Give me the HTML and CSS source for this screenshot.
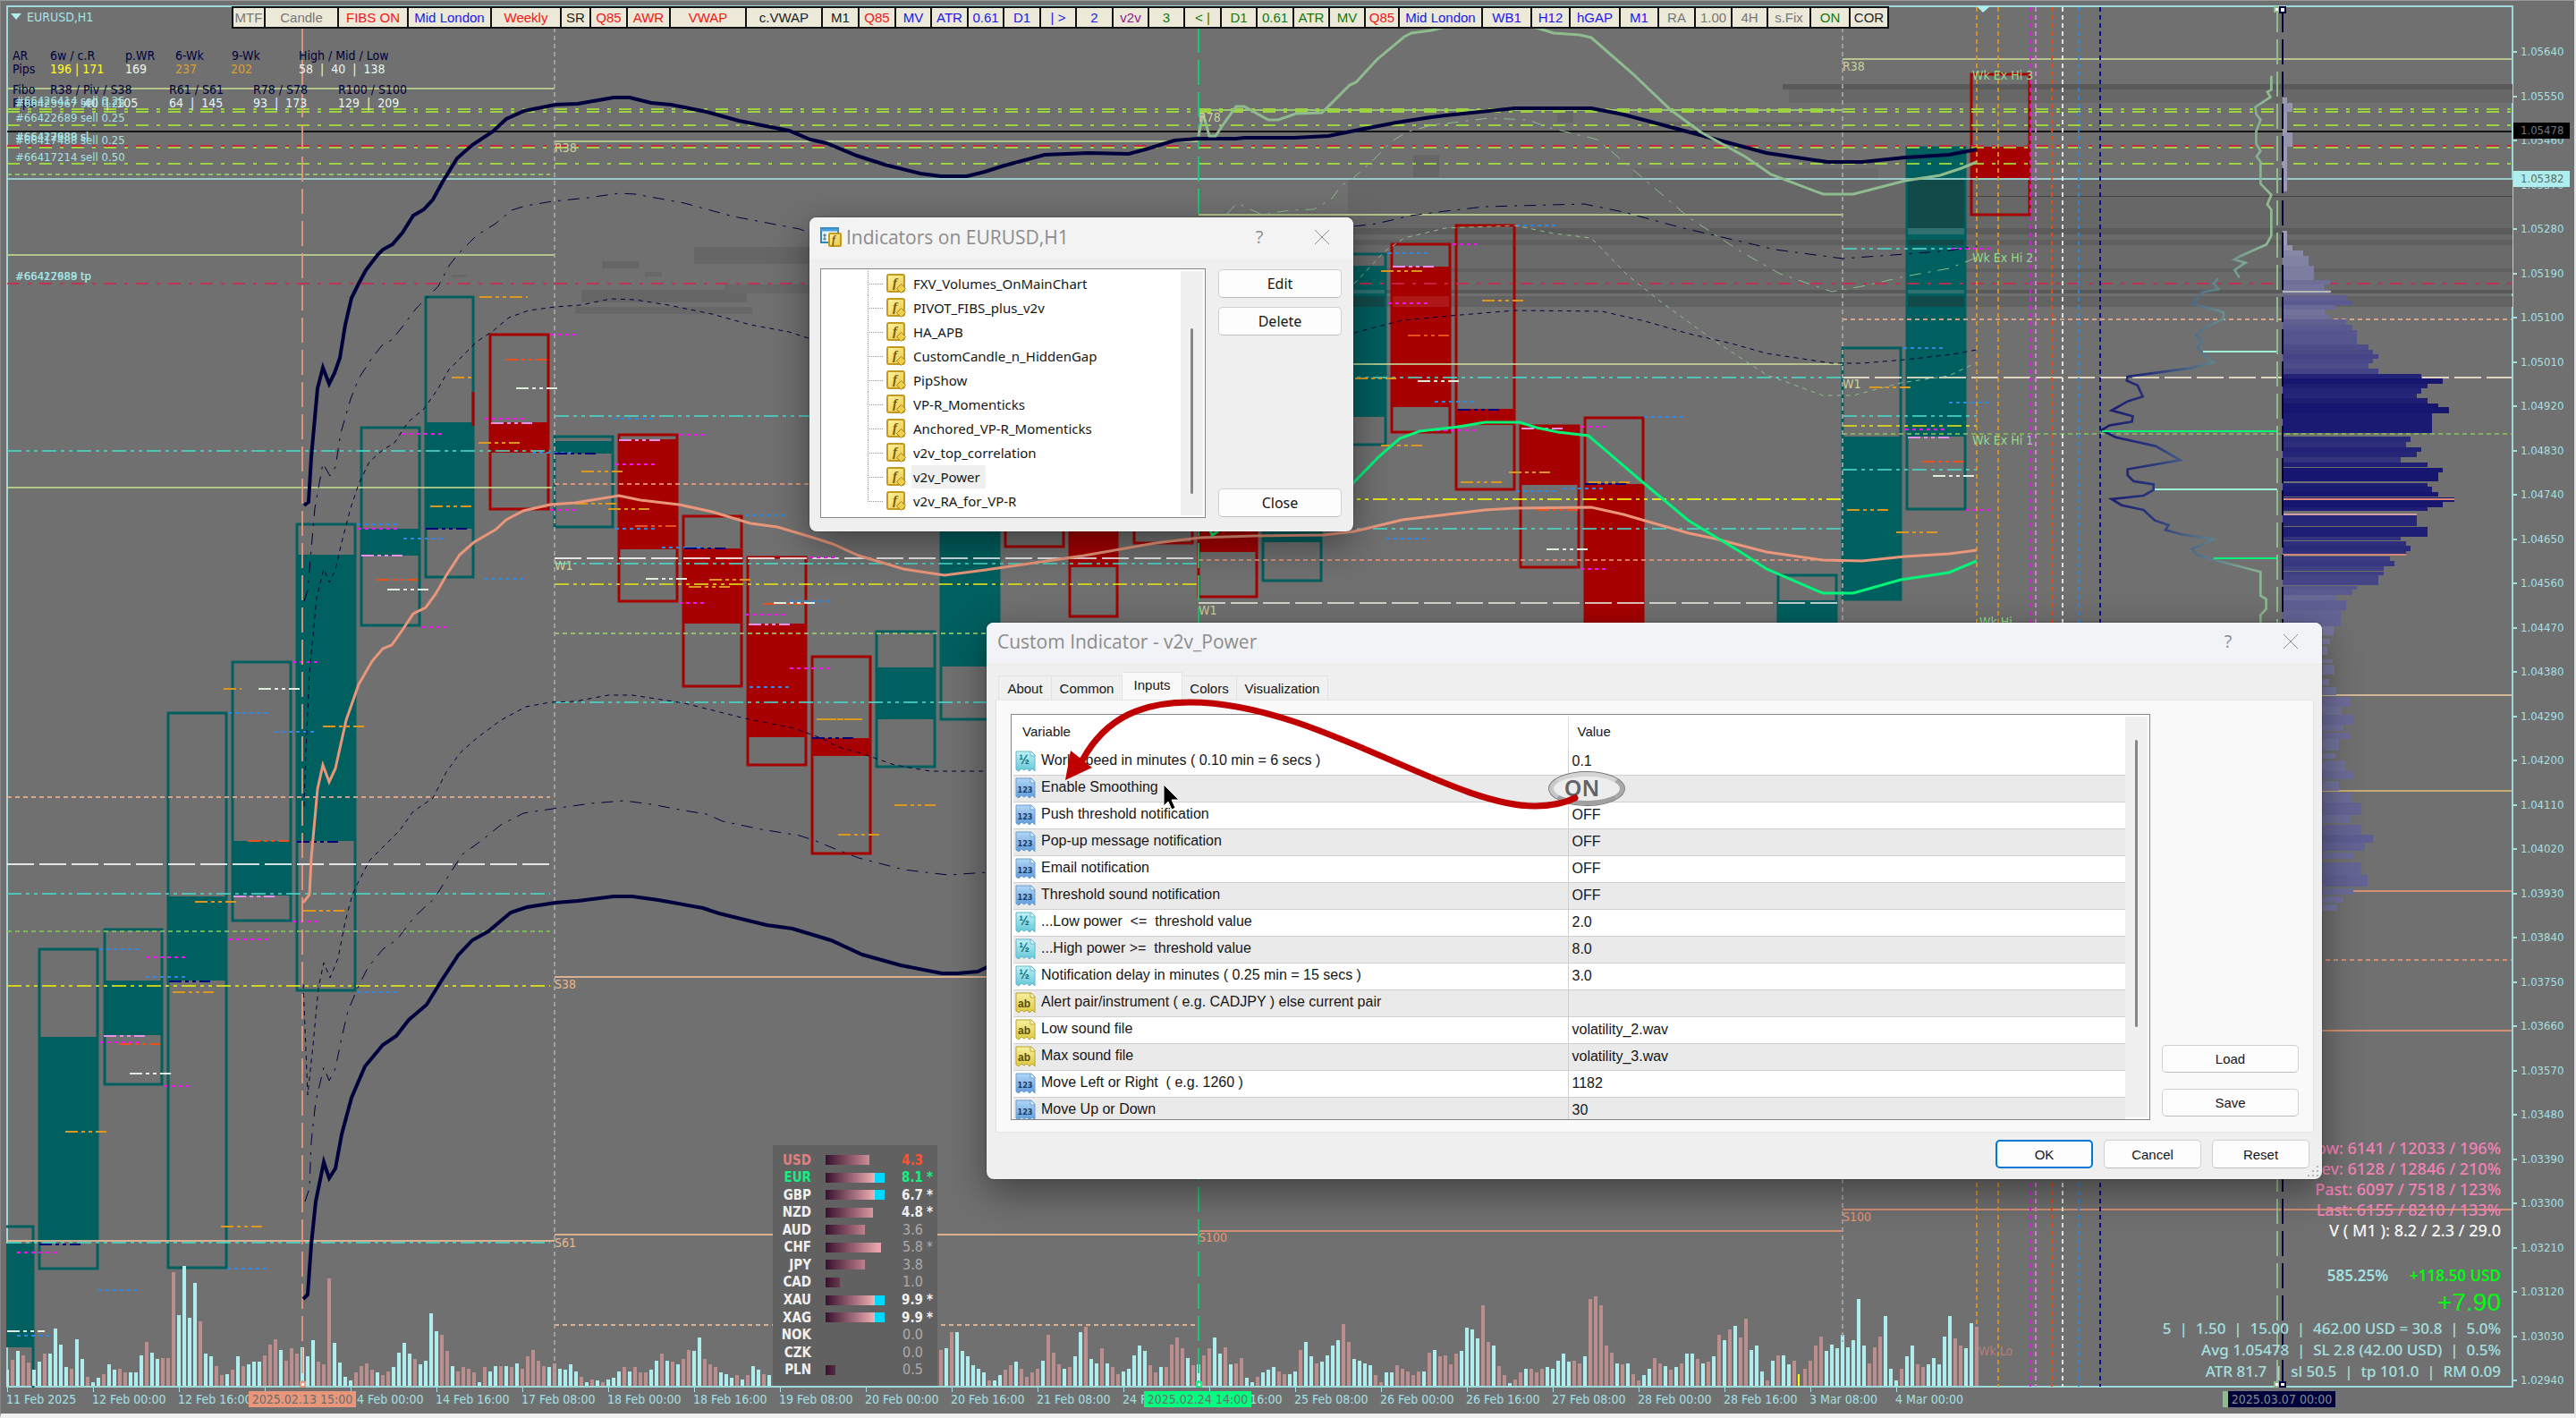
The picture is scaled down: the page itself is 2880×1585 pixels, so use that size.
FILE: index.html
```html
<!DOCTYPE html>
<html lang="en">
<head>
<meta charset="utf-8">
<title>EURUSD,H1</title>
<link rel="stylesheet" href="styles.css">
</head>
<body>
<svg class="defs" aria-hidden="true">
  <defs>
    <linearGradient id="gold" x1="0" y1="0" x2="1" y2="1"><stop offset="0" stop-color="#fff6a8"/><stop offset="1" stop-color="#e8c43c"/></linearGradient>
    <linearGradient id="blue" x1="0" y1="0" x2="0" y2="1"><stop offset="0" stop-color="#b4d6f6"/><stop offset="1" stop-color="#5f9bd8"/></linearGradient>
    <linearGradient id="cyan" x1="0" y1="0" x2="0" y2="1"><stop offset="0" stop-color="#c4f2f6"/><stop offset="1" stop-color="#62c6d6"/></linearGradient>
    <linearGradient id="yellow" x1="0" y1="0" x2="0" y2="1"><stop offset="0" stop-color="#f8f0a0"/><stop offset="1" stop-color="#dcc840"/></linearGradient>
    <symbol id="i-fn" viewBox="0 0 22 22">
      <rect x="1" y="1" width="19" height="19" rx="2" fill="url(#gold)" stroke="#c39a1d" stroke-width="2"/>
      <text x="7" y="15" class="glyph-f">f</text>
      <path d="M16.500 11.500l5 5-5 5-5-5z" fill="#f0cf4a" stroke="#a9821a"/>
    </symbol>
    <symbol id="i-num" viewBox="0 0 23 24">
      <path d="M1 1h17l4 4v18l-3-3-3 3-3-3-3 2-3-2-3 3-3-2z" fill="url(#blue)" stroke="#6a9fd0"/>
      <path d="M17 1v5h5" fill="#e4f1fc" stroke="#6a9fd0"/>
      <text x="11" y="17" class="glyph-num">123</text>
    </symbol>
    <symbol id="i-dbl" viewBox="0 0 23 24">
      <path d="M1 1h17l4 4v18l-3-3-3 3-3-3-3 2-3-2-3 3-3-2z" fill="url(#cyan)" stroke="#5cb8c8"/>
      <path d="M17 1v5h5" fill="#e6fbfd" stroke="#5cb8c8"/>
      <text x="10" y="15" class="glyph-dbl">½</text>
    </symbol>
    <symbol id="i-str" viewBox="0 0 23 24">
      <path d="M1 1h17l4 4v18l-3-3-3 3-3-3-3 2-3-2-3 3-3-2z" fill="url(#yellow)" stroke="#b9a52e"/>
      <path d="M17 1v5h5" fill="#fffbd0" stroke="#b9a52e"/>
      <text x="10" y="17" class="glyph-str">ab</text>
    </symbol>
  </defs>
</svg>

<main class="terminal">
  <section class="plot">
    <svg class="canvas" viewBox="7 6 2803 1545" preserveAspectRatio="none" aria-label="EURUSD H1 chart">
      <defs>
        <linearGradient id="flow" gradientUnits="userSpaceOnUse" x1="380" y1="0" x2="800" y2="0">
          <stop offset="0" stop-color="#191970"/><stop offset=".3" stop-color="#28357a"/><stop offset=".6" stop-color="#55758a"/><stop offset=".85" stop-color="#7aa590"/><stop offset="1" stop-color="#8fbc8f"/>
        </linearGradient>
      </defs>
      <g id="bands"></g>
      <g id="candles"></g>
      <g id="levels"></g>
      <g id="marks"></g>
      <g id="volume"></g>
      <g class="verticals">
        <path class="v-long darksalmon" d="M338 31V1550"/>
        <path class="v-dash silver" d="M620 31V1550M2060 31V1500"/>
        <path class="v-long spring" d="M1340 31V1550"/>
        <path class="v-dash orange" d="M2210 8V1480M2234 8V1550"/>
        <path class="v-dash magenta" d="M2270 8V1550"/>
        <path class="v-dash violet" d="M2276 8V1550"/>
        <path class="v-dash orangered" d="M2294 8V1550"/>
        <path class="v-dash white" d="M2306 8V1550"/>
        <path class="v-dash blue" d="M2324 8V1550"/>
        <path class="v-dash navy" d="M2348 8V1550"/>
      </g>
      <g class="curves">
        <path class="wide navyline" d="M340 565L345 561 348 511 355 434 361 411 368 429 374 417 380 400 386 363 393 333 401 317 409 302 422 285 428 279 439 273 450 260 462 241 474 234 484 223 495 203 511 177 528 162 551 147 566 133 586 124 621 117 646 116 686 109 704 109 728 115 750 117 790 125 826 135 882 146 906 156 924 160 958 174 989 184 1029 194 1052 197 1081 197 1101 192 1123 185 1168 173 1217 171 1262 172 1284 166 1313 157 1340 155 1382 155 1391 154 1447 154 1485 152 1525 144 1561 137 1600 131 1616 129 1665 124 1694 121 1779 121 1815 128 1849 137 1912 154 1975 171 2043 181 2082 181 2130 176 2179 173 2210 167"/>
        <path class="wide navyline" d="M339 1452L344 1447 348 1391 353 1343 362 1299 368 1317 375 1306 382 1268 393 1227 408 1192 428 1168 443 1158 457 1140 477 1123 493 1097 512 1068 528 1051 546 1041 571 1020 589 1014 621 1009 646 1007 686 1002 707 1002 736 1006 786 1015 804 1021 857 1034 886 1038 929 1051 964 1067 1007 1079 1053 1088 1071 1088 1093 1086 1110 1078"/>
        <path class="thin dashdot navyline" d="M340 672L344 660 348 614 352 568 361 518 369 532 375 522 381 484 392 446 401 423 416 400 428 385 438 380 450 365 465 345 477 333 490 320 502 297 513 283 533 263 554 250 572 235 588 230 618 225 658 221 692 216 710 217 765 227 820 242 857 249 894 256 910 262M1514 253L1539 250 1577 241 1616 236 1660 231 1771 228 1815 237 1878 254 1985 279 2060 289 2130 284 2179 280 2210 275"/>
        <path class="thin dotted navyline" d="M340 901L342 840 346 752 354 668 362 636 368 651 375 637 382 606 392 568 401 541 413 516 428 503 441 495 456 472 474 457 490 434 502 413 517 398 533 382 551 370 569 355 591 347 621 343 649 341 683 334 710 335 747 341 796 351 839 363 882 371 910 380M1514 372L1568 358 1621 353 1694 347 1791 348 1839 359 1888 373 1936 384 1975 395 2048 406 2082 406 2130 402 2183 396 2210 391"/>
        <path class="thin dotted navyline" d="M339 1100L344 1224 350 1168 356 1104 362 1076 369 1093 378 1071 386 1030 394 1000 401 985 413 962 432 943 447 928 462 907 484 892 499 863 514 842 533 825 560 805 588 790 615 785 643 784 680 777 707 777 765 786 833 803 888 814 918 825 937 835 960 841 1000 855 1040 862 1104 862"/>
        <path class="thin dashdot navyline" d="M341 1343L346 1328 348 1276 353 1231 362 1193 368 1208 375 1194 382 1160 389 1130 400 1104 411 1082 428 1061 444 1050 464 1024 486 1004 502 978 517 955 539 939 560 922 585 909 618 904 661 898 698 895 728 899 765 906 790 910 808 918 851 927 894 934 912 940 934 949 960 959 1010 972 1060 978 1104 975"/>
        <path class="mid darksalmon" d="M339 1009L346 1000 348 959 355 882 361 855 368 874 375 859 387 805 401 765 416 739 428 725 438 721 450 704 462 686 476 679 487 664 499 643 514 620 530 606 554 592 566 581 585 571 615 564 643 562 692 554 716 559 759 564 796 572 839 585 869 589 906 600 931 608 960 621 1010 636 1056 643 1102 637 1212 621 1292 607 1341 601 1402 599 1480 598 1514 594 1568 581 1660 570 1694 568 1779 567 1815 575 1839 582 1888 596 1917 602 1975 617 2038 626 2082 627 2130 622 2179 619 2210 615"/>
        <path class="mid palegreen" d="M1340 152L1345 127 1352 152 1359 152 1369 137 1382 119 1391 119 1418 134 1429 134 1449 127 1478 126 1509 95 1516 92 1540 66 1570 41 1578 37 1600 34 1616 30 1660 26 1718 31 1737 37 1766 39 1779 42 1825 82 1868 123 1902 148 1951 175 1980 195 2038 217 2072 217 2130 202 2169 196 2193 188 2210 181"/>
        <path class="thin dashdot palegreen" d="M1372 239L1383 227 1411 240 1442 235 1469 234 1489 222 1500 207 1512 200 1534 180 1556 158 1572 148 1600 140 1665 132 1708 134 1733 143 1786 156 1839 201 1888 243 1946 281 1990 306 2048 326 2082 320 2130 309 2179 300 2210 288"/>
        <path class="thin dotted palegreen" d="M1514 317L1548 281 1570 266 1616 255 1694 252 1737 261 1779 266 1820 308 1859 339 1917 381 1975 419 2038 442 2072 442 2125 428 2179 420 2210 405"/>
        <path class="mid spring" d="M1352 590L1355 598 1362 594M1508 545L1541 511 1565 490 1587 482 1631 477 1660 472 1699 472 1718 478 1742 483 1776 487 1839 541 1888 582 1946 617 1975 636 2038 663 2072 663 2125 648 2179 640 2210 627"/>
      </g>
      <g id="profile"></g>
      <g transform="translate(2180 0) scale(.4464)">
        <path class="flow" d="M805 190V225L795 230 803 243 765 268 767 285 778 300 767 330V360L778 378 768 392 778 405V460L805 488 795 512 805 525V590L793 612 730 640 712 650 740 658 713 676 725 695M672 697L660 710 672 724 632 732 607 760 685 782V798L640 820 617 840 632 855 620 872 660 908 600 922 445 943 443 953 470 965 483 993 445 1005 405 1028 458 1042 456 1056 400 1065 380 1077 415 1095 515 1117 577 1152 445 1175V1190L460 1205 510 1213V1227L485 1241 405 1250 430 1265 485 1277 513 1303 548 1315 540 1327 580 1338 660 1350 607 1375 620 1390 700 1412 778 1432V1492L792 1500V1525L778 1540V1568"/>
      </g>
      <path class="aqua" d="M2463 393H2546M2409 547H2546"/>
      <path class="spring thin2" d="M2350 482H2546M2475 624H2546"/>
      <path class="v-long palegreen" d="M2546 8V1550"/>
      <path class="v-long midnight" d="M2552 8V1550"/>
      <g class="pins">
        <rect x="2543" y="8" width="5" height="5" stroke="#8fbc8f"/><rect x="2549" y="8" width="6" height="6" stroke="#00003c"/>
        <rect x="2543" y="1545" width="5" height="5" stroke="#8fbc8f"/><rect x="2549" y="1545" width="6" height="5" stroke="#00003c"/>
        <rect x="336" y="1545" width="5" height="5" stroke="#e9967a"/><rect x="1338" y="1545" width="5" height="5" stroke="#00ff7f"/>
      </g>
      <path d="M2210 7H2225L2217 14z" fill="#afeeee"/>
      <path d="M12 15H24L18 22z" fill="#afeeee"/>
      <g class="label">
        <text class="t-turq" x="30" y="24">EURUSD,H1</text>
        <g class="t-navy">
          <text x="14" y="67">AR</text><text x="56" y="67">6w / c.R</text><text x="140" y="67">p.WR</text><text x="196" y="67">6-Wk</text><text x="259" y="67">9-Wk</text><text x="334" y="67">High / Mid / Low</text>
          <text x="14" y="82">Pips</text>
          <text x="14" y="105">Fibo</text><text x="56" y="105">R38 / Piv / S38</text><text x="189" y="105">R61 / S61</text><text x="283" y="105">R78 / S78</text><text x="378" y="105">R100 / S100</text>
          <text x="14" y="120">Pips</text>
        </g>
        <text class="t-yellow" x="56" y="82">196 | 171</text>
        <g class="t-orange"><text x="196" y="82">237</text><text x="258" y="82">202</text></g>
        <g class="t-pale">
          <text x="140" y="82">169</text><text x="334" y="82" xml:space="preserve">58  |  40  |  138</text>
          <text x="94" y="120" xml:space="preserve">40  |  105</text><text x="189" y="120" xml:space="preserve">64  |  145</text><text x="283" y="120" xml:space="preserve">93  |  173</text><text x="378" y="120" xml:space="preserve">129  |  209</text>
        </g>
      </g>
      <g class="order">
        <text x="17" y="117">#66426414 sell 0.25</text><text x="17" y="120">#66423967 sell 0.25</text>
        <text x="17" y="136">#66422689 sell 0.25</text>
        <text x="17" y="157">#66422689 sl</text><text x="17" y="157">#66417988 sl</text>
        <text x="17" y="161">#66417488 sell 0.25</text>
        <text x="17" y="180">#66417214 sell 0.50</text>
        <text x="17" y="313">#66422689 tp</text><text x="17" y="313">#66417988 tp</text>
      </g>
      <g class="label t-khaki">
        <text x="620" y="170">R38</text><text x="2060" y="79">R38</text><text x="1340" y="136">R78</text><text x="620" y="637">W1</text><text x="2060" y="434">W1</text><text x="1340" y="687">W1</text>
      </g>
      <g class="label t-peach"><text x="620" y="1105">S38</text><text x="620" y="1394">S61</text></g>
      <g class="label t-salmon"><text x="1340" y="1388">S100</text><text x="2060" y="1365">S100</text></g>
      <g class="label t-green">
        <text x="2205" y="89">Wk Ex Hi 3</text><text x="2205" y="293">Wk Ex Hi 2</text><text x="2205" y="497">Wk Ex Hi 1</text><text x="2213" y="700">Wk Hi</text>
      </g>
      <text class="label t-rosy" x="2212" y="1515">Wk Lo</text>
    </svg>

    <nav class="toolbar" aria-label="Chart tools">
      <button class="g" style="width:38px">MTF</button><button class="g" style="width:82px">Candle</button><button class="r" style="width:78px">FIBS ON</button><button class="b" style="width:93px">Mid London</button><button class="r" style="width:78px">Weekly</button><button style="width:33px">SR</button><button class="r" style="width:41px">Q85</button><button class="r" style="width:48px">AWR</button><button class="r" style="width:85px">VWAP</button><button style="width:85px">c.VWAP</button><button style="width:41px">M1</button><button class="r" style="width:41px">Q85</button><button class="b" style="width:40px">MV</button><button class="b" style="width:41px">ATR</button><button class="b" style="width:40px">0.61</button><button class="b" style="width:41px">D1</button><button class="b" style="width:40px">| &gt;</button><button class="b" style="width:41px">2</button><button class="p" style="width:40px">v2v</button><button class="n" style="width:40px">3</button><button class="n" style="width:41px">&lt; |</button><button class="n" style="width:40px">D1</button><button class="n" style="width:41px">0.61</button><button class="n" style="width:40px">ATR</button><button class="n" style="width:40px">MV</button><button class="r" style="width:38px">Q85</button><button class="b" style="width:93px">Mid London</button><button class="b" style="width:55px">WB1</button><button class="b" style="width:43px">H12</button><button class="b" style="width:56px">hGAP</button><button class="b" style="width:43px">M1</button><button class="g" style="width:41px">RA</button><button class="g" style="width:41px">1.00</button><button class="g" style="width:40px">4H</button><button class="g" style="width:48px">s.Fix</button><button class="n" style="width:44px">ON</button><button style="width:43px">COR</button>
    </nav>

    <aside class="strength">
      <table>
        <tr class="usd"><th>USD</th><td><i class="meter" style="width:49px"></i></td><td class="num">4.3</td><td></td></tr>
        <tr class="eur"><th>EUR</th><td><i class="meter full"></i></td><td class="num">8.1</td><td>*</td></tr>
        <tr><th>GBP</th><td><i class="meter full"></i></td><td class="num">6.7</td><td>*</td></tr>
        <tr><th>NZD</th><td><i class="meter" style="width:53px"></i></td><td class="num">4.8</td><td>*</td></tr>
        <tr class="weak"><th>AUD</th><td><i class="meter" style="width:44px"></i></td><td class="num">3.6</td><td></td></tr>
        <tr class="weak"><th>CHF</th><td><i class="meter" style="width:62px"></i></td><td class="num">5.8</td><td>*</td></tr>
        <tr class="weak"><th>JPY</th><td><i class="meter" style="width:44px"></i></td><td class="num">3.8</td><td></td></tr>
        <tr class="weak"><th>CAD</th><td><i class="meter" style="width:16px"></i></td><td class="num">1.0</td><td></td></tr>
        <tr><th>XAU</th><td><i class="meter full"></i></td><td class="num">9.9</td><td>*</td></tr>
        <tr><th>XAG</th><td><i class="meter full"></i></td><td class="num">9.9</td><td>*</td></tr>
        <tr class="weak"><th>NOK</th><td></td><td class="num">0.0</td><td></td></tr>
        <tr class="weak"><th>CZK</th><td></td><td class="num">0.0</td><td></td></tr>
        <tr class="weak"><th>PLN</th><td><i class="meter" style="width:11px"></i></td><td class="num">0.5</td><td></td></tr>
      </table>
    </aside>

    <aside class="stats">
      <p class="pink">Now: 6141 / 12033 / 196%</p>
      <p class="pink">Prev: 6128 / 12846 / 210%</p>
      <p class="pink">Past: 6097 / 7518 / 123%</p>
      <p class="pink">Last: 6155 / 8210 / 133%</p>
      <p class="whitish">V ( M1 ): 8.2 / 2.3 / 29.0</p>
      <p class="profit"><span>585.25%</span><b>+118.50 USD</b></p>
      <p class="pips">+7.90</p>
      <p class="risk">5 &nbsp;|&nbsp; 1.50 &nbsp;|&nbsp; 15.00 &nbsp;|&nbsp; 462.00 USD = 30.8 &nbsp;|&nbsp; 5.0%</p>
      <p class="risk">Avg 1.05478 &nbsp;|&nbsp; SL 2.8 (42.00 USD) &nbsp;|&nbsp; 0.5%</p>
      <p class="risk">ATR 81.7 &nbsp;|&nbsp; sl 50.5 &nbsp;|&nbsp; tp 101.0 &nbsp;|&nbsp; RM 0.09</p>
    </aside>
  </section>

  <section class="prices" aria-label="Price scale">
    <ol id="prices"></ol>
    <span class="tag ask">1.05478</span>
    <span class="tag bid">1.05382</span>
  </section>

  <section class="times" aria-label="Time scale">
    <ol>
      <li>11 Feb 2025</li><li>12 Feb 00:00</li><li>12 Feb 16:00</li><li>13 Feb 08:00</li><li>14 Feb 00:00</li><li>14 Feb 16:00</li><li>17 Feb 08:00</li><li>18 Feb 00:00</li><li>18 Feb 16:00</li><li>19 Feb 08:00</li><li>20 Feb 00:00</li><li>20 Feb 16:00</li><li>21 Feb 08:00</li><li>24 Feb 00:00</li><li>24 Feb 16:00</li><li>25 Feb 08:00</li><li>26 Feb 00:00</li><li>26 Feb 16:00</li><li>27 Feb 08:00</li><li>28 Feb 00:00</li><li>28 Feb 16:00</li><li>3 Mar 08:00</li><li>4 Mar 00:00</li>
    </ol>
    <span class="stamp first">2025.02.13 15:00</span>
    <span class="stamp second">2025.02.24 14:00</span>
    <span class="stamp third">2025.03.07 00:00</span>
  </section>
</main>

<section class="dialog indicators" role="dialog" aria-labelledby="d1">
  <header>
    <svg class="app" viewBox="0 0 24 22"><rect x="1" y="1" width="19" height="16" fill="#e9f6fd" stroke="#2f86ba" stroke-width="2"/><path d="M1 3H20" stroke="#4a9fdc" stroke-width="3"/><path d="M5 7V15M3 9h4M3 13h4" stroke="#4a6a80"/><rect x="10" y="7" width="13" height="14" rx="1" fill="url(#gold)" stroke="#c39a1d" stroke-width="2"/><text x="13" y="18" class="glyph-f small">f</text></svg>
    <h2 id="d1">Indicators on EURUSD,H1</h2>
    <button class="cap" aria-label="Help">?</button>
    <button class="cap" aria-label="Close window"><svg viewBox="0 0 16 16"><path d="M0 0L16 16M16 0L0 16"/></svg></button>
  </header>
  <div class="body">
    <div class="tree">
      <ul>
        <li><svg><use href="#i-fn"/></svg><span>FXV_Volumes_OnMainChart</span></li>
        <li><svg><use href="#i-fn"/></svg><span>PIVOT_FIBS_plus_v2v</span></li>
        <li><svg><use href="#i-fn"/></svg><span>HA_APB</span></li>
        <li><svg><use href="#i-fn"/></svg><span>CustomCandle_n_HiddenGap</span></li>
        <li><svg><use href="#i-fn"/></svg><span>PipShow</span></li>
        <li><svg><use href="#i-fn"/></svg><span>VP-R_Momenticks</span></li>
        <li><svg><use href="#i-fn"/></svg><span>Anchored_VP-R_Momenticks</span></li>
        <li><svg><use href="#i-fn"/></svg><span>v2v_top_correlation</span></li>
        <li><svg><use href="#i-fn"/></svg><span class="sel">v2v_Power</span></li>
        <li><svg><use href="#i-fn"/></svg><span>v2v_RA_for_VP-R</span></li>
      </ul>
      <div class="track"><i></i></div>
    </div>
    <div class="actions"><button>Edit</button><button>Delete</button><button class="last">Close</button></div>
  </div>
</section>

<section class="dialog custom" role="dialog" aria-labelledby="d2">
  <header>
    <h2 id="d2">Custom Indicator - v2v_Power</h2>
    <button class="cap" aria-label="Help">?</button>
    <button class="cap" aria-label="Close window"><svg viewBox="0 0 16 16"><path d="M0 0L16 16M16 0L0 16"/></svg></button>
  </header>
  <div class="tabs" role="tablist">
    <button role="tab" style="width:60px">About</button><button role="tab" style="width:79px">Common</button><button role="tab" class="on" aria-selected="true" style="width:67px">Inputs</button><button role="tab" style="width:61px">Colors</button><button role="tab" style="width:102px">Visualization</button>
  </div>
  <div class="pane">
    <div class="grid">
      <table>
        <thead><tr><th>Variable</th><th>Value</th></tr></thead>
        <tbody>
          <tr><td><svg><use href="#i-dbl"/></svg>Work speed in minutes ( 0.10 min = 6 secs )</td><td>0.1</td></tr>
          <tr><td><svg><use href="#i-num"/></svg>Enable Smoothing</td><td><span class="lens">ON</span></td></tr>
          <tr><td><svg><use href="#i-num"/></svg>Push threshold notification</td><td>OFF</td></tr>
          <tr><td><svg><use href="#i-num"/></svg>Pop-up message notification</td><td>OFF</td></tr>
          <tr><td><svg><use href="#i-num"/></svg>Email notification</td><td>OFF</td></tr>
          <tr><td><svg><use href="#i-num"/></svg>Threshold sound notification</td><td>OFF</td></tr>
          <tr><td><svg><use href="#i-dbl"/></svg>...Low power &nbsp;&lt;= &nbsp;threshold value</td><td>2.0</td></tr>
          <tr><td><svg><use href="#i-dbl"/></svg>...High power &gt;= &nbsp;threshold value</td><td>8.0</td></tr>
          <tr><td><svg><use href="#i-dbl"/></svg>Notification delay in minutes ( 0.25 min = 15 secs )</td><td>3.0</td></tr>
          <tr><td><svg><use href="#i-str"/></svg>Alert pair/instrument ( e.g. CADJPY ) else current pair</td><td></td></tr>
          <tr><td><svg><use href="#i-str"/></svg>Low sound file</td><td>volatility_2.wav</td></tr>
          <tr><td><svg><use href="#i-str"/></svg>Max sound file</td><td>volatility_3.wav</td></tr>
          <tr><td><svg><use href="#i-num"/></svg>Move Left or Right &nbsp;( e.g. 1260 )</td><td>1182</td></tr>
          <tr><td><svg><use href="#i-num"/></svg>Move Up or Down</td><td>30</td></tr>
        </tbody>
      </table>
      <div class="track"><i></i></div>
    </div>
    <div class="side"><button>Load</button><button>Save</button></div>
  </div>
  <footer><button class="primary">OK</button><button>Cancel</button><button>Reset</button></footer>
  <svg class="grip" viewBox="0 0 12 12"><path d="M10 0v2M10 5v2M10 10v2M5 5v2M5 10v2M0 10v2" transform="translate(1 0)"/></svg>
  <svg class="note" viewBox="1100 690 700 230" aria-hidden="true">
    <path class="pointer" d="M1301 877v24l5-5 4 9 4-2-4-9h8z"/>
    <path class="swoop" d="M1761 892Q1742 901 1716 901C1620 901 1470 785 1330 785C1280 785 1237 800 1210 850"/>
    <path class="head" d="M1191 872L1197 839 1221 858z"/>
  </svg>
</section>
<script src="chart.js"></script>
</body>
</html>
```
FILE: styles.css
```css
* { box-sizing: border-box; }
body { margin: 0; background: #707070; font-family: "DejaVu Sans Condensed", "Noto Sans", sans-serif; font-size: 13px; overflow: hidden; position: relative; }
button { font: inherit; }
ol, ul, p, h2 { margin: 0; padding: 0; list-style: none; }
.defs { position: absolute; width: 0; height: 0; }

.terminal { display: grid; grid-template: 1fr 29px / 1fr 68px; height: 100vh; border: solid; border-width: 1px 2px 5px 1px; border-color: #9a9a9a #e4e4e4 #f0f0f0 #868686; padding: 5px 0 0 6px; }
.plot { position: relative; outline: 2px solid #9fdada; outline-offset: -2px; min-height: 0; }
.canvas { position: absolute; inset: 0; width: 100%; height: 100%; }
.canvas path { fill: none; }
.canvas path[fill] { fill: #afeeee; }
#levels { opacity: .82; }
.verticals { opacity: .9; }
.verticals path, .v-long, .v-dash { stroke-width: 2; }
.v-long { stroke-dasharray: 28 8; stroke-width: 2; }
.v-dash { stroke-dasharray: 5 4; }
.wide { stroke-width: 4; }
.mid { stroke-width: 3; }
.thin { stroke-width: 1; }
.thin2 { stroke-width: 2; }
.dashdot { stroke-dasharray: 13 8 3 8; }
.dotted { stroke-dasharray: 5 5; }
.navyline, .midnight { stroke: #00003c; }
.darksalmon { stroke: #e9967a; }
.silver { stroke: #a4a4a4; }
.spring { stroke: #00f57a; }
.palegreen { stroke: #8fbc8f; }
.orange { stroke: #e0961a; }
.magenta { stroke: #e815e8; }
.violet { stroke: #de80de; }
.orangered { stroke: #ee4a12; }
.white { stroke: #e6f2e6; }
.blue { stroke: #2c88e0; }
.navy { stroke: #000090; }
.verticals .spring { stroke: #10d070; }
.aqua { stroke: #9ff0d8; stroke-width: 2; }
.flow { stroke: url(#flow); stroke-width: 6; }
.pins rect { fill: #fff; stroke-width: 2; }
.label text, text.label, .order text { font-size: 14px; }
.label, .order { font-family: "DejaVu Sans Condensed", sans-serif; }
.t-turq, .order { fill: #a4e4e4; }
.order text { font-size: 13px; }
.t-navy { fill: #00003c; }
.t-yellow { fill: #ffff20; }
.t-orange { fill: #daa02c; }
.t-pale { fill: #e4f6f6; }
.t-khaki { fill: #cfcf9c; }
.t-peach { fill: #e4b890; }
.t-salmon { fill: #e09a78; }
.t-green { fill: #8fdc8f; }
.t-rosy { fill: #b07f7f; }

.toolbar { position: absolute; left: 252px; top: 1px; display: flex; height: 25px; font-family: "Liberation Sans", sans-serif; font-size: 15px; }
.toolbar button { padding: 0; background: #ece9d8; border: 1px solid #111; border-width: 2px 2px 2px 0; color: #222; white-space: nowrap; flex: none; line-height: 20px; }
.toolbar button:first-child { border-left-width: 2px; }
.toolbar .g { color: #777; }
.toolbar .r { color: #f41616; }
.toolbar .b { color: #1818f0; }
.toolbar .p { color: #8e148e; }
.toolbar .n { color: #107a10; }

.strength { position: absolute; left: 857px; bottom: 2px; width: 184px; height: 269px; padding: 7px 0 8px; background: #616161; color: #f0f0f0; font-size: 15px; font-weight: bold; }
.strength table { width: 100%; height: 254px; border-collapse: collapse; table-layout: fixed; line-height: 16px; }
.strength th, .strength td { padding: 0; text-align: left; }
.strength th { width: 43px; text-align: right; }
.strength td:nth-child(2) { width: 82px; padding-left: 16px; }
.strength .num { text-align: right; width: 43px; }
.strength td:last-child { padding-left: 4px; }
.strength .weak td { color: #acacac; font-weight: normal; }
.strength .weak .num { font-size: 16px; }
.usd th { color: #e08080; }
.usd td { color: #ff5030; }
.eur th, .eur td { color: #14f080; }
.meter { display: block; height: 11px; background: linear-gradient(90deg, #38102e, #e8a4aa 58px); }
.meter.full { width: 66px; background: linear-gradient(90deg, #38102e, #f0b0b4 55px, #00d8ff 55px); }

.stats { position: absolute; right: 14px; bottom: 6px; text-align: right; color: #a4e0e0; font-family: "Noto Sans", sans-serif; font-size: 17px; font-weight: 500; line-height: 24px; white-space: nowrap; }
.stats .pink, .whitish { font-size: 18px; line-height: 23px; }
.stats .pink { color: #f282b6; }
.whitish { color: #f6f6f6; }
.profit { margin-top: 27px; font-weight: 600; }
.profit b { margin-left: 24px; color: #00fc10; font-weight: 600; }
.pips { font: 28px/35px "Liberation Sans", sans-serif; color: #00fc10; }

.prices { position: relative; color: #a4e0e0; }
.prices ol { position: absolute; inset: 44px 0 0; height: 1501px; display: flex; flex-direction: column; justify-content: space-between; line-height: 16px; }
.prices li { padding-left: 8px; position: relative; }
.prices li::before { content: ""; position: absolute; left: 0; top: 7px; width: 4px; height: 2px; background: #a4e0e0; }
.tag { position: absolute; left: 0; width: 63px; height: 18px; line-height: 18px; padding-left: 8px; }
.ask { top: 131px; background: #000; color: #777; }
.bid { top: 185px; background: #afeeee; color: #5c6c6c; }

.times { position: relative; grid-column: 1 / -1; color: #a4e0e0; font-size: 14px; }
.times ol { display: grid; grid-template-columns: repeat(23, 96px); }
.times li { line-height: 16px; padding-top: 5px; position: relative; white-space: nowrap; }
.times li::before { content: ""; position: absolute; left: 1px; top: 0; width: 1px; height: 5px; background: #a4e0e0; }
.stamp { position: absolute; top: 4px; width: 120px; height: 18px; line-height: 18px; text-align: center; color: #6c6c6c; white-space: nowrap; }
.first { left: 271px; background: #e9967a; }
.second { left: 1272px; background: #00ff7f; }
.third { left: 2478px; width: 126px; background: #00003c; border-left: 6px solid #8fbc8f; color: #8a8a8a; }

.dialog { position: absolute; background: #efefef; border-radius: 8px; box-shadow: 0 14px 44px rgba(0, 0, 0, .42), 0 0 2px rgba(0, 0, 0, .5); color: #161616; font-size: 15px; }
.dialog header { display: flex; align-items: center; height: 46px; padding: 0 0 3px 12px; background: #f3f3f3; border-radius: 8px 8px 0 0; color: #8c8c8c; }
.dialog h2 { flex: 1; font: 400 21px/30px "Open Sans", sans-serif; }
.app { width: 24px; height: 22px; margin-right: 5px; }
.cap { width: 70px; height: 30px; padding: 0; border: 0; background: none; color: #8c8c8c; font: 20px/30px "Open Sans", sans-serif; text-align: center; }
.cap svg { width: 16px; height: 16px; stroke: #8c8c8c; overflow: visible; display: block; margin: 0 auto; }
.dialog .actions button, .side button, footer button { background: #fdfdfd; border: 1px solid #d0d0d0; border-bottom-color: #bcbcbc; border-radius: 5px; color: #161616; padding: 0; }
.track { background: #f0f0f0; display: flex; justify-content: center; }
.track i { width: 3px; border-radius: 2px; background: #868686; }
.glyph-f { font: italic bold 15px "Liberation Serif", serif; fill: #7a5a08; }
.glyph-f.small { font-size: 12px; }
.glyph-num { font: bold 9px "DejaVu Sans Condensed", sans-serif; fill: #163a68; text-anchor: middle; }
.glyph-dbl { font: bold 14px "Liberation Sans", sans-serif; fill: #0e7484; text-anchor: middle; }
.glyph-str { font: bold 12px "Liberation Sans", sans-serif; fill: #5a4e08; text-anchor: middle; }

.indicators { left: 905px; top: 243px; width: 608px; height: 351px; font-size: 16px; font-family: "Noto Sans", sans-serif; }
.indicators .body { display: flex; gap: 14px; padding: 11px 13px 0 12px; }
.tree { display: flex; width: 431px; height: 279px; background: #fff; border: 1px solid #828790; padding: 2px 2px 2px 0; font-size: 15px; }
.tree ul { flex: 1; padding: 0 0 0 52px; }
.tree li { display: flex; align-items: center; height: 27px; position: relative; padding-left: 21px; }
.tree li::before { content: ""; position: absolute; left: 0; top: 0; width: 16px; height: 14px; border: dotted #999; border-width: 0 0 1px 1px; }
.tree li:not(:last-child)::after { content: ""; position: absolute; left: 0; top: 14px; height: 13px; border-left: 1px dotted #999; }
.tree li svg { width: 22px; height: 22px; margin-right: 6px; }
.tree span { padding: 0 2px; line-height: 26px; }
.tree .sel { background: #f0f0f0; padding-right: 6px; }
.tree .track { width: 25px; }
.tree .track i { margin: 64px 0 24px; }
.actions { display: flex; flex-direction: column; flex: 1; gap: 10px; padding: 1px 0; }
.actions button { height: 32px; }
.actions .last { margin-top: auto; }

.custom { left: 1103px; top: 696px; width: 1493px; height: 622px; font-family: "Liberation Sans", sans-serif; }
.custom header { background: #f1f3f6; height: 45px; }
.tabs { display: flex; align-items: flex-end; height: 41px; padding-left: 13px; }
.tabs button { height: 27px; padding: 0; background: #f0f0f0; border: 1px solid #e2e2e2; border-width: 1px 1px 0 0; color: #161616; }
.tabs button:first-child { border-left-width: 1px; }
.tabs .on { height: 31px; padding-bottom: 4px; background: #f9f9f9; }
.pane { display: flex; height: 484px; margin: 0 9px 0 10px; padding: 15px 16px 14px; background: #f9f9f9; border: 1px solid #e4e4e4; gap: 13px; }
.grid { display: flex; flex: 1; height: 454px; overflow: hidden; background: #fff; border: 1px solid #828790; padding: 2px; font-size: 16px; }
.grid table { flex: 1; border-collapse: collapse; table-layout: fixed; width: 100%; height: 0; }
.grid th { height: 35px; padding: 0 10px 3px; text-align: left; font-weight: normal; font-size: 15px; }
.grid th:first-child { width: 620px; border-right: 1px solid #e0e0e0; }
.grid td { height: 30px; padding: 0 4px; border-right: 1px solid #d0d0d0; white-space: pre; position: relative; line-height: 20px; }
.grid td:last-child, .grid th:last-child { border-right: 0; }
.grid tr:nth-child(even) td { background: #eaeaea; border-top: 1px solid #d0d0d0; border-bottom: 1px solid #d0d0d0; }
.grid td:first-child { padding-left: 2px; }
.grid td svg { width: 23px; height: 24px; margin-right: 6px; vertical-align: middle; }
.grid .track { width: 25px; flex: none; }
.grid .track i { margin: 26px 0 101px; }
.lens { position: absolute; left: -22px; top: -4px; width: 84px; height: 37px; border-radius: 50%; border: 5px solid #b4b4b4; border-color: #d4d4d4 #a8a8a8 #a0a0a0 #c8c8c8; outline: 1px solid #777; background: #ededed; color: #62626a; font: 600 25px/25px "Noto Sans", sans-serif; text-align: center; padding-right: 10px; }
.side { display: flex; flex-direction: column; justify-content: flex-end; gap: 18px; width: 153px; padding-bottom: 3px; }
.side button { height: 31px; }
footer { display: flex; justify-content: flex-end; gap: 12px; padding: 8px 14px 0 0; }
footer button { width: 109px; height: 32px; }
.dialog .primary { border: 2px solid #0078d4; }
.grip { position: absolute; right: 4px; bottom: 3px; width: 12px; height: 12px; stroke: #b4b4b4; stroke-width: 2; }
.note { position: absolute; left: -3px; top: -6px; width: 700px; height: 230px; pointer-events: none; }
.swoop { fill: none; stroke: #c00000; stroke-width: 7; stroke-linecap: round; }
.head { fill: #c00000; }
.pointer { fill: #000; stroke: #fff; }
```
FILE: chart.js
```js
const NS = "http://www.w3.org/2000/svg";
const layer = id => document.getElementById(id);
function add(parent, tag, attrs) {
  const el = document.createElementNS(NS, tag);
  for (const k in attrs) el.setAttribute(k, attrs[k]);
  parent.appendChild(el);
}

/* price scale: one label every 9 pips */
for (let p = 105640; p >= 102940; p -= 90) {
  const li = document.createElement("li");
  li.textContent = (p / 100000).toFixed(5);
  layer("prices").appendChild(li);
}

/* shaded liquidity bands: x, y, width, height, fill */
[
  [776, 276, 129, 19, "#666"], [673, 292, 42, 8, "#666"], [721, 304, 19, 5, "#686868"], [505, 307, 18, 3, "#686868"],
  [650, 324, 185, 14, "#666"], [811, 318, 94, 10, "#686868"], [643, 343, 198, 8, "#676767"],
  [1507, 201, 1302, 54, "#676767"], [1580, 173, 29, 25, "#666"], [1741, 125, 18, 12, "#666"],
  [1507, 255, 1302, 7, "#5b5b5b"], [1507, 262, 1302, 6, "#696969"], [1507, 268, 1302, 6, "#5f5f5f"], [1507, 274, 1302, 26, "#6a6a6a"],
  [1507, 300, 1302, 4, "#606060"], [1507, 304, 1302, 20, "#6a6a6a"], [1507, 324, 1302, 4, "#595959"], [1507, 331, 1302, 12, "#636363"],
  [1993, 94, 816, 6, "#5a5a5a"], [2000, 100, 809, 15, "#676767"], [2200, 219, 609, 1, "#444"],
  [1855, 136, 170, 4, "#666"], [1825, 188, 275, 11, "#6a6a6a"]
].forEach(([x, y, width, height, fill]) => add(layer("bands"), "rect", { x, y, width, height, fill }));

/* composite candles: left, right, high, body top, body bottom, low */
const teal = "#005f5f", red = "#a60000";
[
  [teal, 2, 38, 1370, 1390, 1506, 1556], [teal, 43, 110, 1060, 1159, 1388, 1419], [teal, 116, 182, 1038, 1096, 1157, 1213],
  [teal, 187, 254, 796, 1002, 1096, 1418], [teal, 259, 326, 739, 940, 1001, 1030], [teal, 331, 398, 585, 620, 940, 1108],
  [teal, 403, 470, 477, 591, 621, 700], [teal, 475, 530, 331, 472, 591, 646], [red, 547, 614, 373, 472, 506, 570],
  [teal, 619, 686, 487, 493, 507, 590], [red, 691, 758, 485, 491, 614, 673], [red, 763, 830, 576, 613, 697, 768],
  [red, 835, 902, 622, 697, 824, 856], [red, 907, 974, 733, 825, 845, 955], [teal, 979, 1046, 705, 746, 804, 858],
  [teal, 1051, 1118, 560, 560, 745, 805], [red, 1123, 1190, 560, 560, 594, 612], [red, 1195, 1250, 560, 580, 634, 690],
  [red, 1267, 1334, 560, 560, 580, 608], [red, 1339, 1406, 560, 570, 617, 668], [teal, 1411, 1478, 560, 570, 606, 650],
  [teal, 1483, 1550, 283, 297, 466, 498], [red, 1555, 1622, 272, 298, 455, 484], [red, 1627, 1694, 251, 457, 475, 548],
  [red, 1699, 1766, 475, 476, 542, 635], [red, 1771, 1838, 466, 541, 720, 760], [teal, 1987, 2054, 642, 671, 740, 800],
  [teal, 2059, 2126, 388, 488, 671, 671], [teal, 2131, 2198, 164, 164, 488, 570], [red, 2203, 2270, 82, 164, 199, 241]
].forEach(([c, l, r, hi, top, bot, lo]) => {
  add(layer("candles"), "rect", { x: l, y: top, width: r - l, height: bot - top, fill: c });
  add(layer("candles"), "rect", { x: l + 1, y: hi + 1, width: r - l - 2, height: lo - hi - 2, fill: "none", stroke: c, "stroke-width": 3 });
});
add(layer("candles"), "path", { d: "M529 438V476", stroke: red, "stroke-width": 3 });
[[2133, 200, 55, "#124a4a"], [2133, 255, 7, "#307070"], [2133, 268, 6, "#124a4a"], [2133, 324, 4, "#307070"], [2133, 331, 12, "#124a4a"],
 [1485, 331, 12, "#124a4a"], [1485, 324, 4, "#307070"], [1557, 331, 12, "#b01818"]]
  .forEach(([x, y, height, fill]) => add(layer("candles"), "rect", { x, y, width: 63, height, fill }));

/* horizontal levels: colour, style, y, x1, x2, thickness */
const dash = { solid: "none", dot: "5 4", dd: "16 5 4 5 4 5", long: "30 6", order: "14 9 4 9" };
const yg = "#a8e838", turq = "#48d8c8", kh = "#c0d890", peach = "#f0c098", sal = "#e89878";
[
  [kh, "solid", 99, 8, 620], [kh, "solid", 285, 8, 620], ["#9cd070", "dot", 195, 8, 615],
  [turq, "dd", 504, 8, 615], ["#c4d890", "solid", 545, 8, 617], ["#f0b494", "dot", 891, 8, 615], ["#fff", "long", 966, 8, 615], [turq, "dd", 999, 8, 615],
  ["#80c858", "dot", 1041, 8, 615], ["#e8e810", "dd", 1102, 8, 615], [peach, "solid", 1387, 8, 620], [turq, "dd", 1389, 8, 615],
  [kh, "solid", 158, 620, 1340], [turq, "dd", 465, 620, 1340], ["#f0a080", "dot", 541, 620, 1340], ["#fff", "long", 624, 620, 1340], [turq, "dd", 630, 620, 1340],
  ["#e0e018", "dd", 653, 620, 1340], ["#9cd070", "dot", 708, 620, 1340], [turq, "dd", 785, 620, 1340], [peach, "solid", 1092, 620, 1340], [peach, "solid", 1380, 620, 1340], [peach, "dot", 1481, 620, 1338],
  ["#a8d878", "solid", 123, 1340, 2060], [kh, "solid", 240, 1340, 2060], ["#c8d898", "solid", 407, 1340, 2060], [turq, "dd", 422, 1340, 2060], ["#ffff00", "dd", 558, 1340, 2060], [turq, "dd", 591, 1340, 2060],
  [sal, "dot", 626, 1340, 2060], ["#e8e8e0", "long", 674, 1340, 2060], [sal, "solid", 1376, 1340, 2060],
  ["#c8d898", "solid", 66, 2060, 2808], [turq, "dd", 278, 2060, 2210], ["#f0b090", "dot", 357, 2060, 2808], ["#f8ecd0", "long", 422, 2060, 2808], [turq, "dd", 465, 2060, 2210], ["#e0e018", "dd", 476, 2060, 2210],
  ["#88c060", "dot", 485, 2060, 2808], [turq, "dd", 525, 2060, 2210], ["#e8c8a0", "solid", 777, 2060, 2808], ["#d8b878", "solid", 884, 2060, 2808], [sal, "solid", 996, 2060, 2808], [sal, "dot", 1073, 2060, 2808],
  [sal, "solid", 1152, 2060, 2808], [sal, "solid", 1352, 2060, 2808],
  [yg, "order", 122, 8, 2808], [yg, "order", 125, 8, 2808], [yg, "order", 123, 1340, 2060, 4], [yg, "order", 140, 8, 2808], [yg, "order", 165, 8, 2808], [yg, "order", 183, 8, 2808],
  ["#d81840", "order", 163, 8, 2808], ["#d02850", "order", 317, 8, 2808], ["#000", "solid", 147, 8, 2808], ["#a0e0e0", "solid", 200, 8, 2808]
].forEach(([stroke, kind, y, x1, x2, w]) =>
  add(layer("levels"), "path", { d: `M${x1} ${y}H${x2}`, stroke, "stroke-width": w || 2, "stroke-dasharray": dash[kind] }));

/* session marks: colour groups of x,y[,width] */
const marks = {
  "#e8501c": "565,402 421,648 710,588 853,675 277,940 133,1167 1574,375 1718,570 2149,516",
  "#dc981c": "505,422,22 535,495 481,566 650,527 692,492 680,569 643,563 793,648 770,656 913,804 937,933 361,812 536,332,54 218,1008 339,1018 193,1109 73,1265 247,1371 1544,303 1515,423 1544,498 1657,336 1633,539 1687,528 1776,539 2090,433 2065,570 2120,595 250,770,20 918,804 1000,900",
  "#2c88e0": "595,506 686,468 399,586 451,602 541,647 688,591 740,612 833,576 883,672 838,768 255,797 307,818 111,1061 163,1092 400,1109 254,1418 109,1442 19,1493 1552,283 1604,449 1549,602 1695,252 1695,549 1748,546 1838,466 2128,389 2179,450",
  "#f015f0": "542,468 450,485 400,591 471,701,28 759,486,28 688,519 615,570,28 759,674,28 905,623,28 833,687 883,747 327,740,28 615,374,28 256,1050 327,1030,28 163,1070 111,1165 183,1214,28 19,1400 1624,273,28 1552,339 1606,481 1767,477,28 1767,636,28 2181,278 2130,480 2198,570,28",
  "#e890e8": "549,473 404,621 837,698 692,492 261,1002 116,1158 1557,298 1701,479 2133,489",
  "#e0ece0": "577,434 433,659 722,647 865,674 289,770 145,1200 8,1488,42 1585,426 1729,614 2161,532",
  "#000078": "620,507 476,591 765,613 908,825 332,941 189,1097 44,1391 1630,458 1772,541"
};
const even = new Set(["#f015f0", "#2c88e0"]);
for (const stroke in marks)
  marks[stroke].split(" ").forEach(m => {
    const [x, y, w = 46] = m.split(",").map(Number);
    add(layer("marks"), "path", { d: `M${x} ${y}h${w}`, stroke, "stroke-width": 2, "stroke-dasharray": even.has(stroke) ? "4 4" : "14 4 4 4 4 4" });
  });

/* tick volume, one bar per hour: c rising, r falling, y gap; tops are measured down to the floor */
const runs = [
  { first: 0, floor: 1472, scale: 2.68, tops: "c1425 r1395 c1368 r1380 r1403 c1425 c1400 r1376 c1376 c1300 c1348 c1415 r1420 c1332 c1391 r1445 c1460 c1447 r1437 c1408 c1424 r1421 r1432 c1432 c1432 c1380 r1340 c1372 c1391 r1388 r1388 r1131 c1259 c1112 c1268 c1163 r1280 c1376 c1384 r1413 r1440 c1437 r1424 c1384 r1413 c1408 c1400 c1400 r1380 r1348 r1332 c1364 r1398 r1360 r1376 c1356 c1384 c1336 r1400 r1408 r1151 c1344 c1403 c1445 c1457 r1432 r1413 r1404 r1424 c1432 r1440 r1429 c1416 c1372 c1344 c1376 r1392 c1408 c1396" },
  { first: 79, floor: 1472, scale: 2.68, tops: "c1256 c1308 r1320 r1368 c1413 r1429 r1416 r1421 r1432 c1461 r1416 c1429 c1413 r1413 c1413 r1416 c1404 r1421 r1384 r1364 r1396 r1413 c1416 r1404 c1421 c1424 c1408 c1429 r1445 c1461 r1453 c1456 r1461 c1453 c1448 c1429 r1416 c1429 r1416 r1432 r1432 c1424 c1396 r1376 c1396 r1400 c1408 r1392 r1364 c1368 c1328 r1392 r1408 r1416 c1432 c1437 c1448 r1440 c1453 r1440 c1413 c1424 r1437 c1440" },
  { first: 174, floor: 838, scale: 3, tops: "r717 c712 r658 c658 c722 c740 c770 c780 c793 r820 c820 c802 r784 r770 c757 r780 r807 r793 r780 c753 r667 r726 r766 c780 r775 c740 c658 r640 c748 c762 r712 c762 r775 r798 c789 c780 c735 c703 c722 r770 r793 c775 r775 r699 r676 r712 c744 r770 c766 r735 r712 c676 c730 r708 c766 r762 r744 c811 c825 r807 c793 c784 c775 r789 r798 c798 c789 r717 c690 c740 r762 c757 c735 c703 c685 r631 r690 c748 c753 c762 c770 r802 r825 c793 c793 r770 r780 r789 r802 r789 c789 r726 c717 r740 r735" },
  { first: 269, floor: 718, scale: 3, tops: "r646 r610 c601 c524 c529 c560 r448 r570 c583 r651 r682 c709 r696 r673 c660 r660 r673 r660 c655 c660 c633 c610 c637 r633 r642 c619 r426 r417 r448 r583 r606 c642 r646 c642 r678 r700 c682 c660 r624 r642 c651 r664 c655 r642 c610 c610 r628 c642 r637 c619 r547 c565 r529 c516 r556 r493 c597 c583 c669 r700 c633 r615 c615 c646 r633 y678 r660 r633 r583 r552 c601 c579 c592 c547 c588 c565 c426 c583 r642 r588 r552 c484 c660 c700 r660 c619 c583 r646 r655 c646 c624 c646 c552 c484 r560 r583 c592 c507 r520" }
];
const tint = { c: "#afeeee", r: "#bc8f8f", y: "#ffff00" };
runs.forEach(run => run.tops.split(" ").forEach((t, i) => {
  const height = Math.round((run.floor - t.slice(1)) / run.scale);
  const width = t[0] === "y" ? 2 : 4;
  add(layer("volume"), "rect", { x: 6 + 6 * (run.first + i), y: 1549 - height, width, height, fill: tint[t[0]] });
}));

/* volume profile: "top-bottom:reach" in profile units */
const profile = "245-258:845 258-281:858 281-332:845 332-367:858 367-479:845 578-614:845 614-627:858 627-641:885 641-665:898 665-702:912 702-713:952 713-725:939 725-736:952 739-752:993 752-763:1007 763-775:966 775-788:939 788-800:952 800-814:993 814-826:1007 826-863:1020 863-875:1047 875-887:1060 887-899:1073 899-909:1060 909-923:1047 923-937:1073 937-947:1181 947-960:1235 960-973:1195 973-985:1181 985-997:1168 997-1011:1195 1011-1020:1222 1020-1034:1249 1034-1084:1208 1093-1107:1154 1107-1120:1141 1120-1132:1181 1132-1145:1168 1145-1157:1128 1157-1169:1195 1172-1182:1235 1182-1206:1222 1210-1219:1195 1219-1232:1208 1232-1243:1222 1245-1256:1262 1256-1269:1235 1269-1279:1195 1286-1317:1168 1319-1343:1195 1344-1353:1128 1356-1366:1141 1366-1380:1154 1380-1392:1141 1394-1404:1101 1404-1417:1114 1417-1429:1087 1431-1440:1087 1441-1464:1073 1467-1477:1020 1477-1490:1007 1490-1502:966 1504-1528:993 1528-1568:979 1568-1590:960 1600-1612:952 1620-1640:945 1650-1660:958 1665-1690:962 1700-1715:950 1720-1740:968 1745-1770:1000 1770-1790:980 1790-1815:1012 1815-1830:985 1835-1850:1000 1850-1880:975 1885-1900:965 1905-1930:990 1930-1950:1010 1955-1980:975 1985-2010:1005 2010-2040:1030 2040-2060:1000 2065-2090:1030 2090-2110:1060 2110-2130:1040 2135-2150:1010 2160-2190:1030 2190-2220:1045 2225-2240:1010 2245-2260:985 2265-2280:970";
profile.split(" ").forEach(p => {
  const [a, b, reach] = p.split(/[-:]/).map(Number);
  const faded = a > 1560 ? .75 : 1;
  const t = faded * Math.min(1, Math.pow((reach - 840) / 380, .85));
  const mix = (from, to) => Math.round(from + (to - from) * t);
  add(layer("profile"), "rect", {
    x: 2552, y: Math.round(a / 2.24), width: Math.round((reach - 833) / 2.24), height: Math.max(2, Math.round(b / 2.24) - Math.round(a / 2.24)),
    fill: `rgb(${mix(158, 22)},${mix(158, 22)},${mix(176, 112)})`
  });
});
[["#e08878", 558, 192], ["#d0a0a8", 575, 150], ["#d08878", 620, 138], ["#b8b8b8", 326, 54]]
  .forEach(([stroke, y, w]) => add(layer("profile"), "path", { d: `M2552 ${y}h${w}`, stroke, "stroke-width": 2 }));
```
